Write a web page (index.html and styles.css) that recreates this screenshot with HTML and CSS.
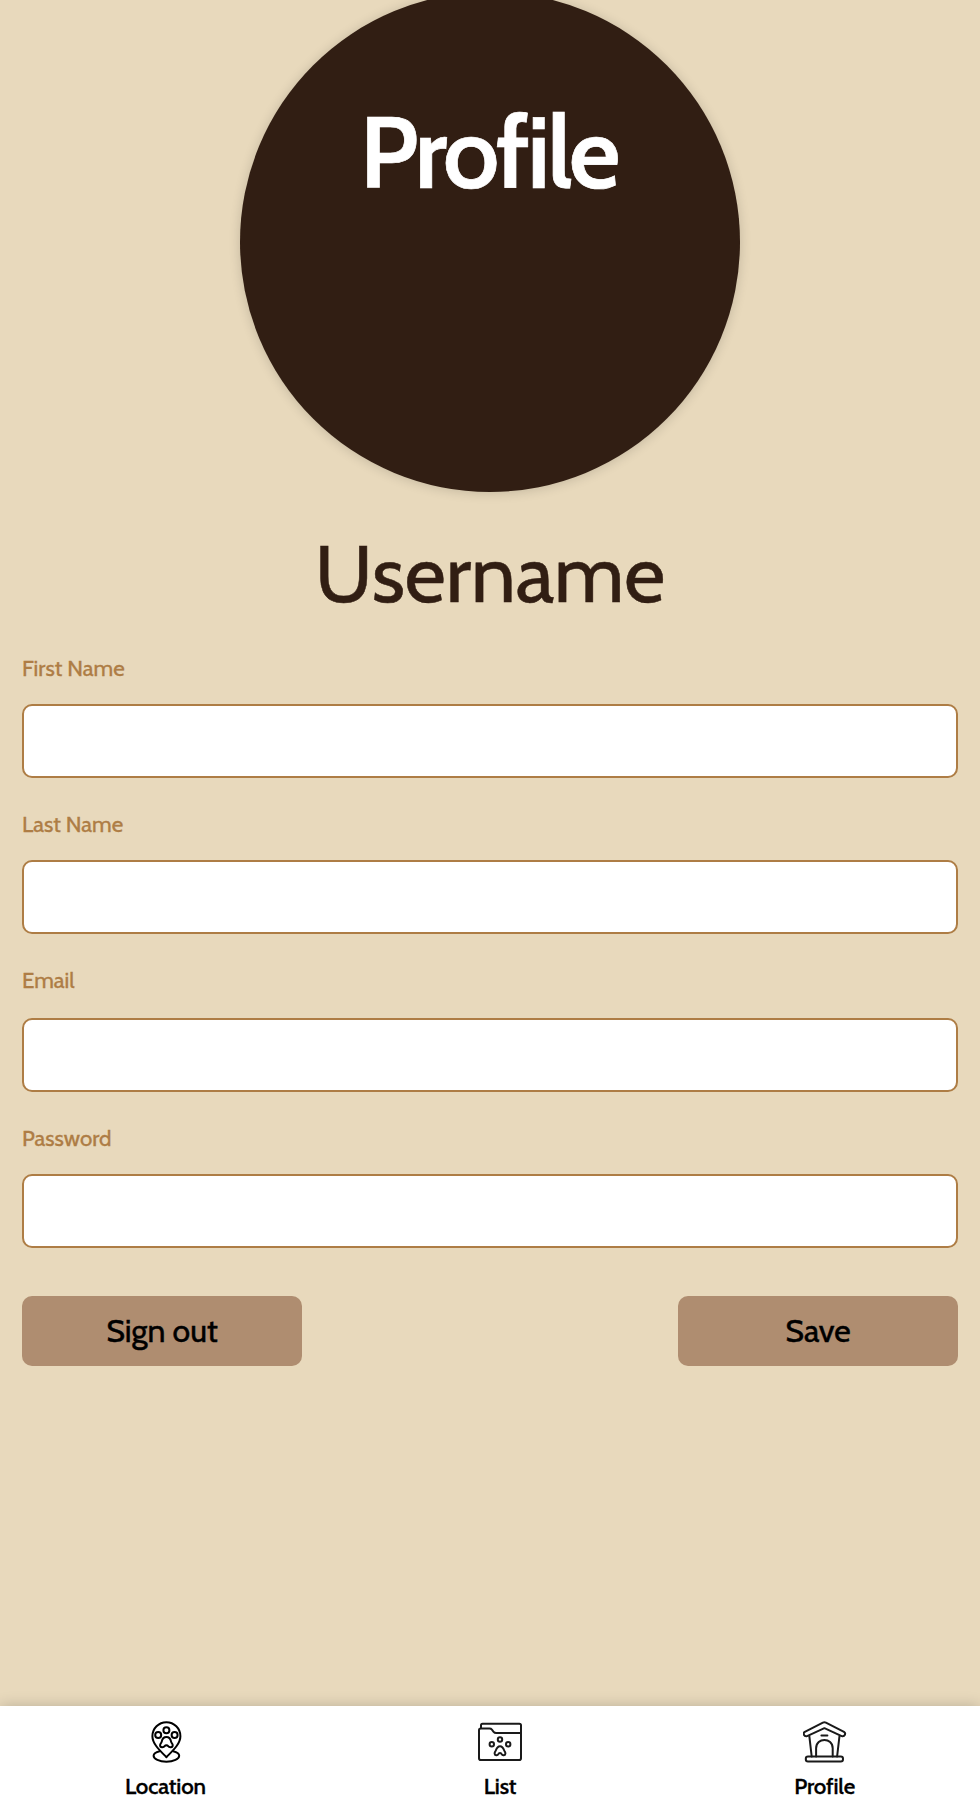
FILE: index.html
```html
<!DOCTYPE html>
<html lang="en">
<head>
<meta charset="utf-8">
<title>Profile</title>
<link rel="stylesheet" href="styles.css">
</head>
<body>
<div class="page">
  <header class="hero"><h1 class="hero-title">Profile</h1></header>
  <h2 class="username">Username</h2>
  <form class="form">
    <label class="label" for="first">First Name</label>
    <input class="input" id="first" type="text">
    <label class="label" for="last">Last Name</label>
    <input class="input" id="last" type="text">
    <label class="label label-email" for="email">Email</label>
    <input class="input" id="email" type="email">
    <label class="label" for="password">Password</label>
    <input class="input" id="password" type="password">
    <div class="actions">
      <button class="button" type="button">Sign out</button>
      <button class="button" type="button">Save</button>
    </div>
  </form>
  <nav class="nav">
    <a class="nav-item">
      <svg class="icon" viewBox="-1.4 -0.5 44 44" fill="none" stroke="#000" stroke-width="2" stroke-linejoin="round" stroke-linecap="round">
        <path d="M22 36.700C16 30.500 8 23.500 8 15.700a14 14 0 0 1 28 0C36 23.500 28 30.500 22 36.700Z"/>
        <path d="M15.200 30.700c-3.500.8-6 2.300-6 4.500 0 3.300 5.700 6 12.800 6s12.800-2.700 12.800-6c0-2.200-2.500-3.700-6-4.500"/>
        <circle cx="22" cy="9.700" r="3"/><circle cx="13.800" cy="14.500" r="3"/><circle cx="30.200" cy="14.500" r="3"/>
        <path d="M22 16.500c-3 0-4.200 2.200-4.600 4.400-.3 1.700-1.700 2.300-1.700 3.900 0 2.700 3.600 2.500 4.600.8.800-1.200 2.600-1.200 3.400 0 1 1.700 4.600 1.900 4.600-.8 0-1.600-1.400-2.200-1.700-3.900-.4-2.200-1.600-4.400-4.600-4.400Z"/>
      </svg>
      <span>Location</span>
    </a>
    <a class="nav-item">
      <svg class="icon" viewBox="0 0 44 44" fill="none" stroke="#1a1a1a" stroke-width="2" stroke-linejoin="round" stroke-linecap="round">
        <path d="M3 8.500V5.200Q3 3.700 4.500 3.700H41.400Q43 3.700 43 5.200V38.200Q43 40 41.200 40H2.800Q1 40 1 38.200V10.300Q1 8.600 2.700 8.600H11.500Q13 8.600 13.900 9.700L15.600 11.800Q16.600 13 18.200 13H43"/>
        <circle cx="22" cy="19.500" r="2.200"/><circle cx="13.800" cy="24.300" r="2.200"/><circle cx="30.200" cy="24.300" r="2.200"/>
        <path d="M22 26.200c-2.200 0-3.300 1.800-4.200 4.300-.4 1.100-1.200 1.700-1.200 2.900 0 2.300 3 2.400 3.700.8.600-1.500 2.800-1.500 3.400 0 .7 1.600 3.700 1.500 3.700-.8 0-1.200-.8-1.800-1.200-2.900-.9-2.500-2-4.300-4.200-4.300Z"/>
      </svg>
      <span>List</span>
    </a>
    <a class="nav-item">
      <svg class="icon" viewBox="0.6 -0.3 44 44" fill="none" stroke="#1a1a1a" stroke-width="2" stroke-linejoin="round" stroke-linecap="round">
        <path d="M20.500 2.400Q22 1.700 23.500 2.400L41.600 11.600Q43.300 12.700 42.500 14.400 41.600 16.400 39.300 15.800L22 7.900 4.700 15.800Q2.400 16.400 1.500 14.400.7 12.700 2.400 11.600Z"/>
        <path d="M6.900 15.600 9.300 36.200M37.100 15.600 34.700 36.200M19 15.300H25M13.700 36.200V28C13.700 16.800 30.300 16.800 30.300 28V36.200"/>
        <rect x="3.400" y="36.200" width="37.200" height="5" rx="2.200"/>
      </svg>
      <span>Profile</span>
    </a>
  </nav>
</div>
</body>
</html>
```
FILE: styles.css
```css
* { box-sizing: border-box; }
body {
  margin: 0;
  font-family: Cabin, Lato, "Open Sans", sans-serif;
  background: #e8d9bc;
}
.page {
  display: flex;
  flex-direction: column;
  height: 1798px;
}
.hero {
  flex: none;
  width: 500px;
  height: 500px;
  margin: -8px auto 0;
  padding-top: 100px;
  border-radius: 50%;
  background: #311e13;
  box-shadow: 0 1px 12px rgba(0, 0, 0, 0.16);
  text-align: center;
}
.hero-title {
  margin: 0;
  padding-right: 3px;
  font-size: 100px;
  line-height: 120px;
  font-weight: 600;
  letter-spacing: -3px;
  -webkit-text-stroke: 0.7px #fff;
  color: #fff;
}
.username {
  margin: 34px 0 0;
  font-size: 80px;
  line-height: 96px;
  font-weight: 400;
  -webkit-text-stroke: 0.5px #311e13;
  text-align: center;
  color: #311e13;
}
.form {
  display: flex;
  flex-direction: column;
  padding: 32px 22px 0;
}
.label {
  height: 50px;
  font-size: 22.4px;
  line-height: 28px;
  -webkit-text-stroke: 0.3px #ae7d45;
  color: #ae7d45;
}
.label-email { height: 52px; }
.input {
  flex: none;
  height: 74px;
  margin-bottom: 32px;
  padding: 0 16px;
  border: 2px solid #ae7d45;
  border-radius: 10px;
  background: #fff;
  font: inherit;
}
.actions {
  display: flex;
  justify-content: space-between;
  padding-top: 16px;
}
.button {
  width: 280px;
  height: 70px;
  padding: 0;
  border: 0;
  border-radius: 10px;
  background: #af8d70;
  font: 400 32px/70px Cabin, Lato, sans-serif;
  -webkit-text-stroke: 0.4px #000;
  color: #000;
}
.nav {
  display: flex;
  justify-content: space-between;
  height: 92px;
  margin-top: auto;
  padding: 14px 125px 0;
  background: #fff;
  box-shadow: 0 0 14px rgba(0, 0, 0, 0.2);
}
.nav-item {
  display: flex;
  flex-direction: column;
  align-items: center;
  font-size: 22.4px;
  line-height: 26px;
  font-weight: 500;
  letter-spacing: -0.15px;
  -webkit-text-stroke: 0.3px #000;
  color: #000;
}
.icon {
  width: 44px;
  height: 44px;
  margin-bottom: 9px;
  flex: none;
}
```
